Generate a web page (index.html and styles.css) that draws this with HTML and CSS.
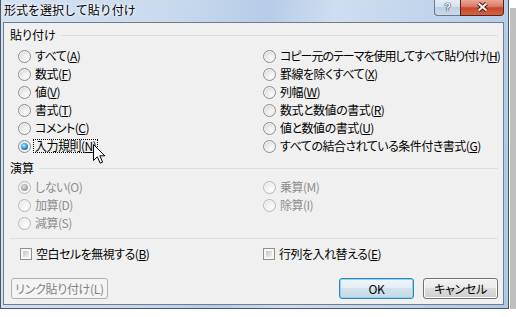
FILE: index.html
```html
<!DOCTYPE html>
<html lang="ja">
<head>
<meta charset="utf-8">
<title>形式を選択して貼り付け</title>
<link rel="stylesheet" href="styles.css">
</head>
<body>
<div class="window">
  <div class="titlebar">
    <div class="title">形式を選択して貼り付け</div>
    <div class="caption-buttons">
      <div class="cap-btn help"><span class="qmark">?</span></div>
      <div class="cap-btn close">
        <svg width="13" height="10" viewBox="0 0 13 10">
          <path d="M2.5 1.5 L10.5 8.5 M10.5 1.5 L2.5 8.5" stroke="#4a1c12" stroke-width="4.2" fill="none"/>
          <path d="M2.5 1.5 L10.5 8.5 M10.5 1.5 L2.5 8.5" stroke="#f4f0ee" stroke-width="2.2" fill="none"/>
        </svg>
      </div>
    </div>
  </div>
  <div class="client">
    <div class="group-head"><span class="group-label">貼り付け</span><span class="group-line"></span></div>
    <div class="options paste">
      <div class="opt"><span class="radio"></span><span class="lbl">すべて(<u>A</u>)</span></div>
      <div class="opt"><span class="radio"></span><span class="lbl">数式(<u>F</u>)</span></div>
      <div class="opt"><span class="radio"></span><span class="lbl">値(<u>V</u>)</span></div>
      <div class="opt"><span class="radio"></span><span class="lbl">書式(<u>T</u>)</span></div>
      <div class="opt"><span class="radio"></span><span class="lbl">コメント(<u>C</u>)</span></div>
      <div class="opt"><span class="radio on"></span><span class="lbl focus">入力規則(<u>N</u>)</span></div>
      <div class="opt"><span class="radio"></span><span class="lbl long">コピー元のテーマを使用してすべて貼り付け(<u>H</u>)</span></div>
      <div class="opt"><span class="radio"></span><span class="lbl">罫線を除くすべて(<u>X</u>)</span></div>
      <div class="opt"><span class="radio"></span><span class="lbl">列幅(<u>W</u>)</span></div>
      <div class="opt"><span class="radio"></span><span class="lbl">数式と数値の書式(<u>R</u>)</span></div>
      <div class="opt"><span class="radio"></span><span class="lbl">値と数値の書式(<u>U</u>)</span></div>
      <div class="opt"><span class="radio"></span><span class="lbl">すべての結合されている条件付き書式(<u>G</u>)</span></div>
    </div>
    <div class="group-head second"><span class="group-label">演算</span><span class="group-line"></span></div>
    <div class="options ops">
      <div class="opt"><span class="radio dis on"></span><span class="lbl dis">しない(O)</span></div>
      <div class="opt"><span class="radio dis"></span><span class="lbl dis">加算(D)</span></div>
      <div class="opt"><span class="radio dis"></span><span class="lbl dis">減算(S)</span></div>
      <div class="opt"><span class="radio dis"></span><span class="lbl dis">乗算(M)</span></div>
      <div class="opt"><span class="radio dis"></span><span class="lbl dis">除算(I)</span></div>
    </div>
    <div class="sep"></div>
    <div class="checks">
      <div class="opt"><span class="check"></span><span class="lbl">空白セルを無視する(<u>B</u>)</span></div>
      <div class="opt"><span class="check"></span><span class="lbl">行列を入れ替える(<u>E</u>)</span></div>
    </div>
    <div class="buttons">
      <div class="btn link">リンク貼り付け(L)</div>
      <div class="btn ok">OK</div>
      <div class="btn cancel">キャンセル</div>
    </div>
  </div>
  <svg class="cursor" width="13" height="20" viewBox="0 0 13 20">
    <path d="M0.5 0.5 L0.5 16.5 L4.3 12.8 L7.2 19.2 L9.6 18.1 L6.8 11.8 L11.8 11.8 Z" fill="#fff" stroke="#000" stroke-width="1" stroke-linejoin="miter"/>
  </svg>
</div>
</body>
</html>
```

FILE: styles.css
```css
html, body {
  margin: 0;
  padding: 0;
  background: #ffffff;
}

body {
  font-family: "Noto Sans CJK JP", "Noto Sans", sans-serif;
  font-size: 12px;
  color: #000;
}

.window {
  position: relative;
  width: 509px;
  height: 309px;
  box-sizing: border-box;
  border: 1px solid #4d5866;
  border-top: 0;
  padding: 0 4px 3px 2px;
  background: linear-gradient(100deg, #d3e2f2 0%, #c9daee 30%, #b6cce7 48%, #cfdef0 60%, #c2d5ec 75%, #b0c8e5 100%);
  box-shadow: 1px 1px 0 #ffffff, 8px 8px 0 #bfbfbf;
  display: flex;
  flex-direction: column;
  overflow: visible;
}

.titlebar {
  height: 22px;
  flex: none;
  display: flex;
  justify-content: space-between;
  align-items: flex-start;
}

.title {
  padding-left: 1px;
  line-height: 20px;
  font-size: 12px;
  color: #000;
  text-shadow: 0 0 5px #ffffff, 0 0 3px #ffffff;
}

.caption-buttons {
  display: flex;
  height: 16px;
}

.cap-btn {
  height: 16px;
  box-sizing: border-box;
  display: flex;
  align-items: center;
  justify-content: center;
}

.help {
  width: 26px;
  border: 1px solid #6b788a;
  border-top: 0;
  border-right: 0;
  border-radius: 0 0 0 4px;
  background: linear-gradient(#e6eef7 0%, #d5e1ef 45%, #bccfe5 50%, #cbdbee 100%);
}

.qmark {
  font-family: "Liberation Sans", sans-serif;
  font-weight: bold;
  font-size: 11px;
  line-height: 12px;
  color: #f4f7fa;
  text-shadow: 0 0 1px #34404e, 0 0 1px #34404e, 0 0 1px #34404e;
  margin-top: -2px;
}

.close {
  width: 44px;
  border: 1px solid #5a2216;
  border-top: 0;
  border-radius: 0 0 4px 0;
  background: linear-gradient(#e9a797 0%, #d97761 45%, #c6462c 52%, #d3643f 100%);
}

.close svg {
  display: block;
  margin-top: -2px;
}

.client {
  flex: 1;
  min-width: 0;
  border: 1px solid #6f7d8f;
  background: #f0f0f0;
  padding: 2px 5px 0 6px;
  display: flex;
  flex-direction: column;
}

.group-head {
  display: flex;
  align-items: center;
  height: 20px;
  gap: 5px;
  margin-bottom: 2px;
}

.group-head.second {
  margin-top: 3px;
  margin-bottom: 0;
}

.group-label {
  line-height: 12px;
  font-feature-settings: "palt";
}

.group-line {
  flex: 1;
  height: 1px;
  background: #d5dfe5;
}

.options {
  display: grid;
  grid-auto-flow: column;
  grid-template-columns: 245px minmax(0, 1fr);
  grid-template-rows: repeat(6, 18px);
  padding-left: 8px;
}

.options.ops {
  grid-template-rows: repeat(3, 18px);
}

.opt {
  display: flex;
  align-items: center;
  height: 18px;
  min-width: 0;
}

.lbl {
  line-height: 12px;
  padding: 0 1px;
  border: 1px dotted transparent;
  font-feature-settings: "palt";
  letter-spacing: -0.5px;
  white-space: nowrap;
}

.lbl.long {
  letter-spacing: -1px;
}

.lbl u {
  text-underline-offset: 1px;
}

.lbl.focus {
  border-color: #000;
}

.lbl.dis {
  color: #8d8d8d;
}

.radio {
  width: 13px;
  height: 13px;
  box-sizing: border-box;
  border-radius: 50%;
  border: 1px solid #8b8d8e;
  background: radial-gradient(circle at 65% 70%, #fbfbfb 0%, #ececec 40%, #cbcbcb 100%);
  box-shadow: inset 0 0 0 1px #f6f6f6;
  margin-right: 2px;
  flex: none;
  display: flex;
  align-items: center;
  justify-content: center;
}

.radio.on::after {
  content: "";
  width: 7px;
  height: 7px;
  border-radius: 50%;
  background: radial-gradient(circle at 40% 35%, #b8e8ff 0%, #45aaea 40%, #1b6aa8 75%, #174f7f 100%);
}

.radio.dis {
  border-color: #b8b8b8;
  background: radial-gradient(circle at 65% 70%, #fdfdfd 0%, #f1f1f1 45%, #dfdfdf 100%);
}

.radio.dis.on::after {
  background: radial-gradient(circle at 40% 35%, #e2e2e2 0%, #acacac 50%, #8f8f8f 100%);
}

.sep {
  height: 1px;
  background: #d5dfe5;
  margin-top: 6px;
}

.checks {
  display: grid;
  grid-template-columns: 243px minmax(0, 1fr);
  padding-left: 10px;
  margin-top: 6px;
}

.check {
  width: 12px;
  height: 12px;
  box-sizing: border-box;
  border: 1px solid #8e8f8f;
  padding: 2px;
  background: linear-gradient(135deg, #c4c4c4, #f2f2f2) content-box, #f8f8f8;
  margin-right: 2px;
  flex: none;
}

.buttons {
  display: flex;
  margin-top: 15px;
  padding-left: 1px;
}

.btn {
  height: 21px;
  box-sizing: border-box;
  border: 1px solid #707070;
  border-radius: 3px;
  background: linear-gradient(#f2f2f2 0%, #ebebeb 45%, #dddddd 50%, #cfcfcf 100%);
  box-shadow: inset 0 0 0 1px #fbfbfb;
  display: flex;
  align-items: center;
  justify-content: center;
  line-height: 12px;
  font-feature-settings: "palt";
  letter-spacing: -0.3px;
  white-space: nowrap;
}

.btn.link {
  width: 97px;
  border-color: #adb2b5;
  background: #f4f4f4;
  box-shadow: none;
  color: #838383;
}

.btn.ok {
  width: 75px;
  margin-left: auto;
  border-color: #3c7fb1;
  box-shadow: inset 0 0 0 1px #7fd9f9;
  background: linear-gradient(#eef6fa 0%, #e4eef4 45%, #d3e1ea 50%, #c8d8e3 100%);
}

.btn.cancel {
  width: 75px;
  margin-left: 9px;
}

.cursor {
  position: absolute;
  left: 92px;
  top: 144px;
}
```
